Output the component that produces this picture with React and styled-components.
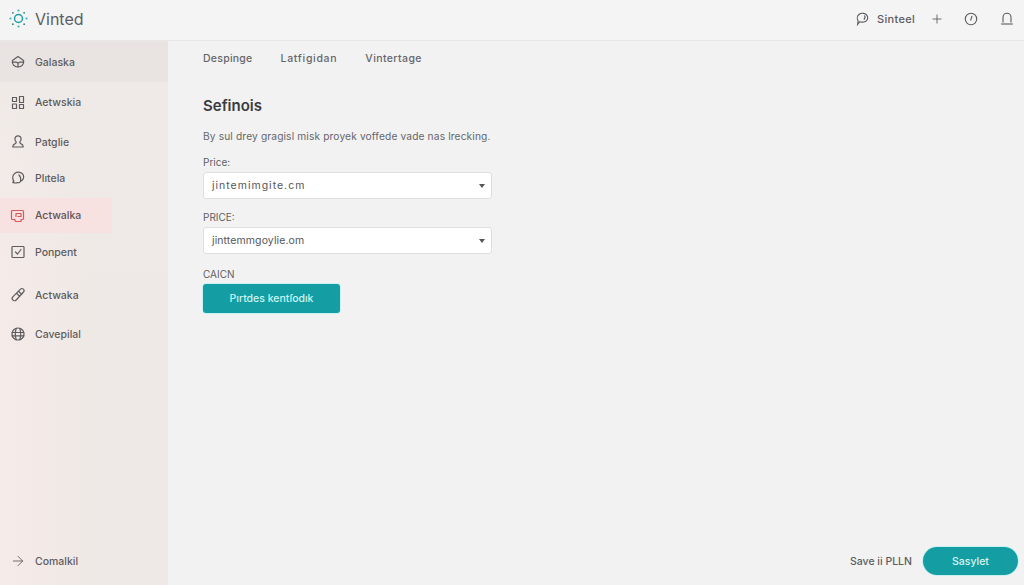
import React from 'react';
import styled, { createGlobalStyle } from 'styled-components';
import { ArrowRight, Plus } from 'lucide-react';

const GlobalStyle = createGlobalStyle`
  html, body {
    margin: 0;
    padding: 0;
    height: 100%;
    overflow: hidden;
    background: #f2f2f2;
    font-family: "Inter", "Noto Sans", sans-serif;
    color: #55555a;
  }
  #root {
    height: 100%;
  }
`;

const Shell = styled.div`
  display: flex;
  flex-direction: column;
  height: 585px;
`;

const Header = styled.header`
  flex: 0 0 41px;
  box-sizing: border-box;
  display: flex;
  align-items: center;
  justify-content: space-between;
  padding: 0 10px 3px 9px;
  background: #f4f4f4;
  border-bottom: 1px solid #e7e7e7;
`;

const Brand = styled.div`
  display: flex;
  align-items: center;
  gap: 7px;
  font-size: 16px;
  color: #5b5e63;
`;

const HeaderTools = styled.div`
  display: flex;
  align-items: center;
  color: #5c5c60;
`;

const UserName = styled.span`
  font-size: 11px;
  font-weight: 500;
  letter-spacing: 0.3px;
  margin: 0 15px 0 8px;
`;

const ToolSlot = styled.span`
  display: flex;
  margin-right: ${({ $gap }) => $gap || 0}px;
`;

const Body = styled.div`
  flex: 1;
  display: flex;
  min-height: 0;
`;

const Sidebar = styled.aside`
  flex: 0 0 168px;
  display: flex;
  flex-direction: column;
  justify-content: space-between;
  background:
    linear-gradient(180deg, #efeae7 0%, rgba(239, 234, 231, 0) 45%),
    linear-gradient(90deg, #f5ebe9 0%, #efe9e6 50%, #eee9e6 100%);
`;

const NavList = styled.nav`
  display: grid;
  grid-template-rows: 41px 41px 38px 34px 3px 35px 38px 48px 30px;
`;

const NavRow = styled.div`
  grid-row: ${({ $row }) => $row};
  box-sizing: border-box;
  display: flex;
  align-items: center;
  gap: 9px;
  padding-left: 10px;
  padding-top: ${({ $current }) => ($current ? '1px' : '0')};
  width: ${({ $active }) => ($active ? '112px' : '100%')};
  font-size: 10.5px;
  font-weight: 500;
  color: ${({ $active }) => ($active ? '#5f5557' : '#5e5c5e')};
  background: ${({ $active, $current }) =>
    $active ? '#f8e1e1' : $current ? '#e9e4e1' : 'transparent'};
`;

const FootRow = styled(NavRow)`
  height: 48px;
`;

const IconBox = styled.svg`
  width: 16px;
  height: 16px;
  flex: none;
  fill: none;
  stroke: ${({ $red }) => ($red ? '#d9575a' : 'currentColor')};
  stroke-width: 1.2;
  stroke-linecap: round;
  stroke-linejoin: round;
`;

const Main = styled.main`
  flex: 1;
  display: flex;
  flex-direction: column;
  justify-content: space-between;
  padding: 0 6px 10px 35px;
`;

const Tabs = styled.div`
  display: flex;
  gap: 28px;
  height: 34px;
  align-items: center;
  font-size: 10.5px;
  font-weight: 500;
  color: #66666a;
`;

const Tab = styled.span`
  letter-spacing: ${({ $spread }) => $spread}px;
`;

const Title = styled.h1`
  margin: 21px 0 0;
  height: 20px;
  line-height: 20px;
  font-size: 15px;
  font-weight: 600;
  color: #3c3c40;
`;

const Lead = styled.p`
  margin: 13px 0 0;
  height: 14px;
  line-height: 14px;
  font-size: 10.2px;
  letter-spacing: 0.14px;
  color: #66666a;
`;

const FieldLabel = styled.div`
  margin-top: ${({ $top }) => $top}px;
  height: 12px;
  line-height: 12px;
  font-size: 10px;
  color: #5f5f63;
`;

const SelectBox = styled.div`
  box-sizing: border-box;
  width: 289px;
  height: 27px;
  margin-top: 4px;
  padding: 0 6px 0 8px;
  display: flex;
  align-items: center;
  justify-content: space-between;
  background: #ffffff;
  border: 1px solid #dfdfdf;
  border-radius: 3px;
  font-size: 10.5px;
  letter-spacing: ${({ $spread }) => $spread || 0}px;
  color: #55555a;
`;

const Caret = styled.span`
  width: 0;
  height: 0;
  border-left: 3px solid transparent;
  border-right: 3px solid transparent;
  border-top: 4px solid #55555a;
`;

const PrimaryButton = styled.button`
  display: block;
  box-sizing: border-box;
  width: 137px;
  height: 29px;
  margin-top: 4px;
  padding: 0;
  border: 0;
  border-radius: 3px;
  background: #149ea3;
  box-shadow: 0 0 0 1px #c9f1f1;
  color: #c8f4f3;
  font: 500 10.5px "Inter", "Noto Sans", sans-serif;
`;

const Footer = styled.div`
  display: flex;
  align-items: center;
  justify-content: flex-end;
  gap: 11px;
`;

const SaveText = styled.span`
  font-size: 10.5px;
  font-weight: 500;
  color: #5c5c60;
`;

const PillButton = styled.button`
  width: 95px;
  height: 28px;
  padding: 0;
  border: 0;
  border-radius: 14px;
  background: #149ea3;
  box-shadow: 0 0 0 1px #c9f1f1;
  color: #d8f6f5;
  font: 500 10.5px "Inter", "Noto Sans", sans-serif;
`;

const Logo = () => (
  <svg width="19" height="19" viewBox="0 0 19 19" fill="none">
    <circle cx="9.500" cy="9.500" r="4" stroke="#1f9ea5" strokeWidth="1.5" />
    {[0, 45, 90, 135, 180, 225, 270, 315].map((a) => (
      <circle
        key={a}
        cx={9.5 + 8 * Math.cos((a * Math.PI) / 180)}
        cy={9.5 + 8 * Math.sin((a * Math.PI) / 180)}
        r={a % 90 === 0 ? 1.1 : 0.9}
        fill={a % 90 === 0 ? '#3fb3b8' : '#2a7f88'}
      />
    ))}
  </svg>
);

const HomeIcon = () => (
  <IconBox viewBox="0 0 16 16">
    <path d="M8 2.500 13.600 6.400c.6 3.600-1.800 6.600-5.600 6.600S1.800 10 2.400 6.400Z" />
    <path d="M2.500 8.200h4l1.500 1 1.500-1h4M8 9.200V13" />
  </IconBox>
);

const BlocksIcon = () => (
  <IconBox viewBox="0 0 16 16">
    <rect x="2.500" y="2.500" width="4" height="4" />
    <rect x="9.500" y="1.500" width="4" height="6" />
    <rect x="2.500" y="9" width="4" height="4.500" />
    <rect x="9.500" y="9.500" width="4" height="4" />
  </IconBox>
);

const PersonIcon = () => (
  <IconBox viewBox="0 0 16 16">
    <path d="M8 1.800a3.100 3.100 0 0 1 3.100 3.200c0 1.400-.7 2.400-1.400 3.100 0 1 .7 1.500 1.800 2 1.200.5 1.700 1.300 1.700 2.900H2.800c0-1.600.5-2.400 1.700-2.900 1.100-.5 1.800-1 1.800-2-.7-.7-1.400-1.700-1.400-3.100A3.100 3.100 0 0 1 8 1.800Z" />
  </IconBox>
);

const ChatIcon = () => (
  <IconBox viewBox="0 0 16 16">
    <path d="M5 3.200C7.500 1.400 12 2 13.300 5c1 2.500-.2 5.200-2.700 6.100-.6 1.500-2 2-3.100 1.400-1.300.8-3.400.4-4.800-.1l1.200-1.300C2.300 9 1.900 5.400 5 3.200Z" />
    <path d="M10.600 11.100C11 8.500 10.500 6.500 9 5" />
  </IconBox>
);

const CardIcon = () => (
  <IconBox viewBox="0 0 16 16" $red>
    <path d="M5 11.500H2.500a1 1 0 0 1-1-1v-7a1 1 0 0 1 1-1h10a1 1 0 0 1 1 1v7a1 1 0 0 1-1 1H11v2H6a1 1 0 0 1-1-1Z" />
    <path d="M6 5.500h5v3H8M6 5.500v3" />
  </IconBox>
);

const CheckIcon = () => (
  <IconBox viewBox="0 0 16 16">
    <rect x="2" y="2.500" width="12" height="11" rx=".8" />
    <path d="m5.500 8 2 2 3.500-4.500" />
  </IconBox>
);

const PencilIcon = () => (
  <IconBox viewBox="0 0 16 16">
    <path d="M10.500 2.200a2 2 0 0 1 3 2.800l-7.300 8a2.300 2.300 0 0 1-3.400-3.100Z" />
    <path d="m6.500 6.300 3.200 2.900M8.500 4.300l3.200 2.900" />
  </IconBox>
);

const GlobeIcon = () => (
  <IconBox viewBox="0 0 16 16">
    <circle cx="8" cy="8" r="6" />
    <path d="M2 6.500h12M2 9.800h12M6.300 2.300C5 6 5 10 6.300 13.700M9.700 2.300c1.300 3.700 1.300 7.700 0 11.400" />
  </IconBox>
);

const BubbleIcon = () => (
  <svg width="13" height="14" viewBox="0 0 13 14" fill="none" stroke="currentColor" strokeWidth="1.1">
    <path d="M3.200 2.200C5.500.6 10 1 11.300 4c1.100 2.700-.6 5.800-3.500 6-1.600.2-3.200 0-4.200-.2l-2 2.600.5-3.500C1 7 .8 3.900 3.200 2.200Z" />
    <path d="M8.500 3.500c.8 1.500.6 3-.7 4" />
  </svg>
);

const DialIcon = () => (
  <svg width="14" height="14" viewBox="0 0 14 14" fill="none" stroke="currentColor" strokeWidth="1.1">
    <circle cx="7" cy="7" r="5.700" />
    <path d="M8 3.800 6.600 8.600" />
  </svg>
);

const BellIcon = () => (
  <svg width="14" height="15" viewBox="0 0 14 15" fill="none" stroke="currentColor" strokeWidth="1.1">
    <path d="M3 11.500V6.200a4 4 0 0 1 8 0v5.300" />
    <path d="M1.200 13h11.600" />
  </svg>
);

const navItems = [
  { row: 1, label: 'Galaska', icon: <HomeIcon />, current: true },
  { row: 2, label: 'Aetwskia', icon: <BlocksIcon /> },
  { row: 3, label: 'Patglie', icon: <PersonIcon /> },
  { row: 4, label: 'Plıtela', icon: <ChatIcon /> },
  { row: 6, label: 'Actwalka', icon: <CardIcon />, active: true },
  { row: 7, label: 'Ponpent', icon: <CheckIcon /> },
  { row: 8, label: 'Actwaka', icon: <PencilIcon /> },
  { row: 9, label: 'Cavepilal', icon: <GlobeIcon /> },
];

const App = () => (
  <Shell>
    <GlobalStyle />
    <Header>
      <Brand>
        <Logo />
        Vinted
      </Brand>
      <HeaderTools>
        <BubbleIcon />
        <UserName>Sinteel</UserName>
        <ToolSlot $gap={20}>
          <Plus size={14} strokeWidth={1.5} />
        </ToolSlot>
        <ToolSlot $gap={22}>
          <DialIcon />
        </ToolSlot>
        <ToolSlot>
          <BellIcon />
        </ToolSlot>
      </HeaderTools>
    </Header>
    <Body>
      <Sidebar>
        <NavList>
          {navItems.map((item) => (
            <NavRow key={item.row} $row={item.row} $active={item.active} $current={item.current}>
              {item.icon}
              {item.label}
            </NavRow>
          ))}
        </NavList>
        <FootRow>
          <ArrowRight size={16} strokeWidth={1.3} />
          Comalkil
        </FootRow>
      </Sidebar>
      <Main>
        <div>
          <Tabs>
            <Tab $spread={0.25}>Despinge</Tab>
            <Tab $spread={0.7}>Latfigidan</Tab>
            <Tab $spread={0.4}>Vintertage</Tab>
          </Tabs>
          <Title>Sefinois</Title>
          <Lead>By sul drey gragisl misk proyek voffede vade nas lrecking.</Lead>
          <FieldLabel $top={13}>Price:</FieldLabel>
          <SelectBox $spread={1}>
            jintemimgite.cm
            <Caret />
          </SelectBox>
          <FieldLabel $top={12}>PRICE:</FieldLabel>
          <SelectBox $spread={0.1}>
            jinttemmgoylie.om
            <Caret />
          </SelectBox>
          <FieldLabel $top={14}>CAICN</FieldLabel>
          <PrimaryButton>Pırtdes kentſodık</PrimaryButton>
        </div>
        <Footer>
          <SaveText>Save ii PLLN</SaveText>
          <PillButton>Sasylet</PillButton>
        </Footer>
      </Main>
    </Body>
  </Shell>
);

export default App;
